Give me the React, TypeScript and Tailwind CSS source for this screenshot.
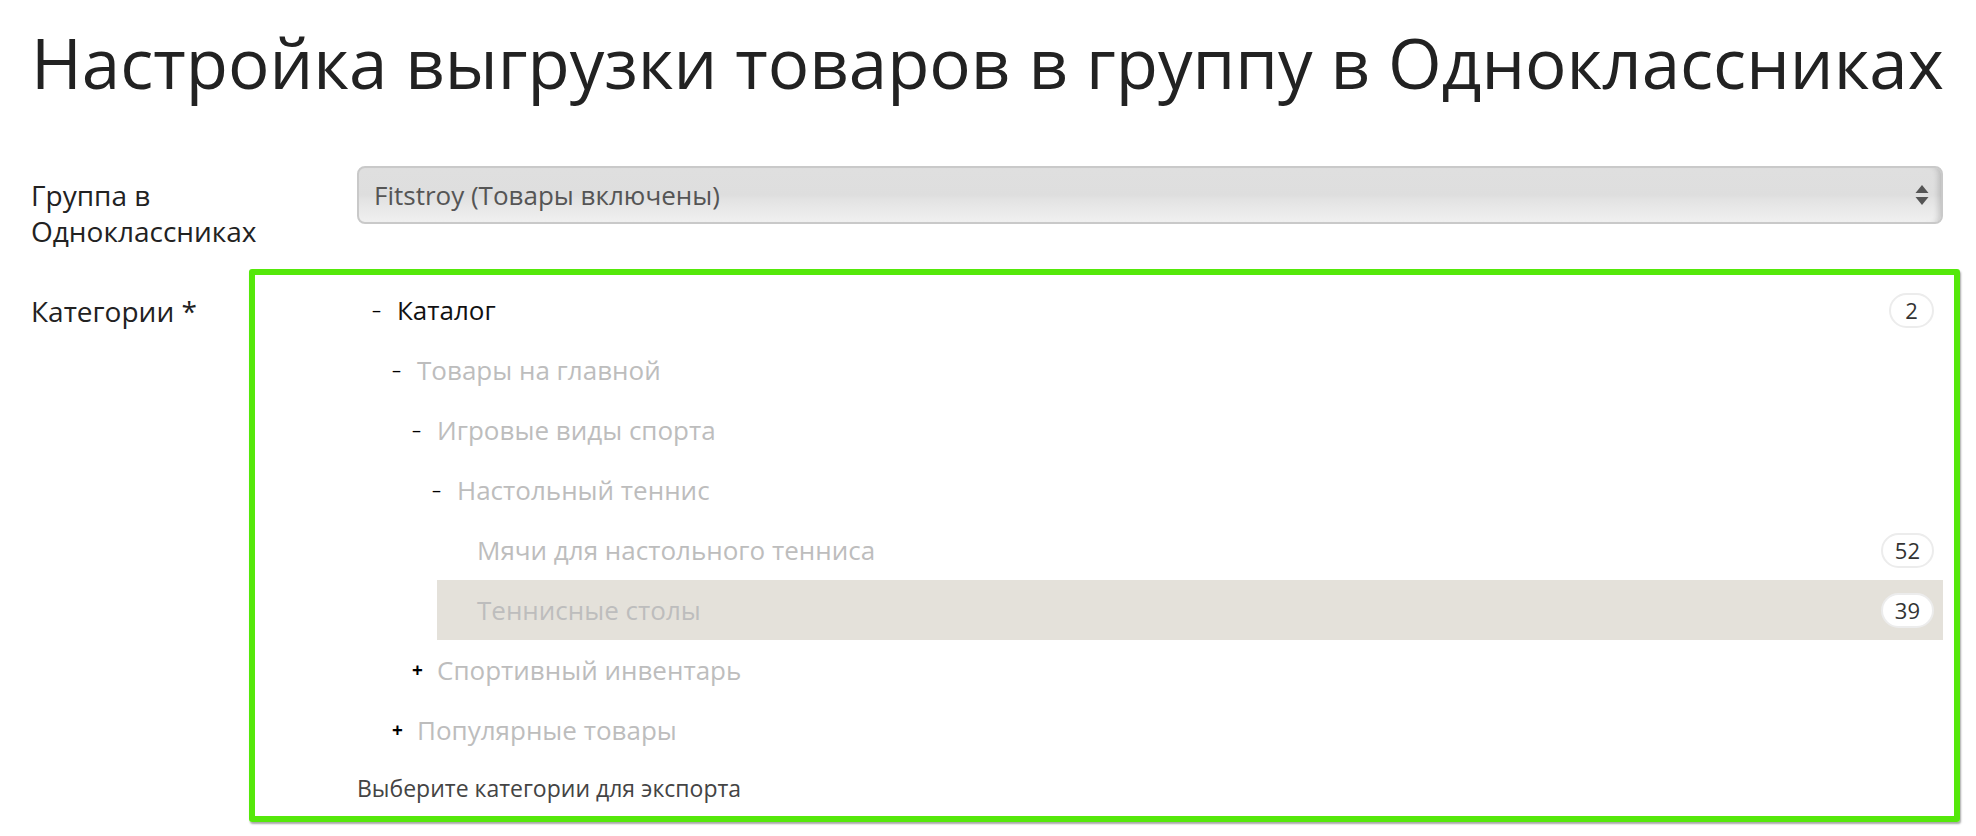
import { ReactNode } from 'react'

type Row = {
  level: number
  toggle?: '–' | '+'
  label: string
  count?: number
  active?: boolean
  selected?: boolean
}

const ROWS: Row[] = [
  { level: 0, toggle: '–', label: 'Каталог', count: 2, active: true },
  { level: 1, toggle: '–', label: 'Товары на главной' },
  { level: 2, toggle: '–', label: 'Игровые виды спорта' },
  { level: 3, toggle: '–', label: 'Настольный теннис' },
  { level: 4, label: 'Мячи для настольного тенниса', count: 52 },
  { level: 4, label: 'Теннисные столы', count: 39, selected: true },
  { level: 2, toggle: '+', label: 'Спортивный инвентарь' },
  { level: 1, toggle: '+', label: 'Популярные товары' },
]

// indent per tree level, written out so tailwind picks them up
const INDENT = ['ml-0', 'ml-[20px]', 'ml-[40px]', 'ml-[60px]', 'ml-[80px]']

function Field({ label, children }: { label: ReactNode; children: ReactNode }) {
  return (
    <div className="grid grid-cols-[326px_1fr] items-start">
      <div className="text-[28px] leading-[36px] font-medium text-[#222]">{label}</div>
      <div>{children}</div>
    </div>
  )
}

function Badge({ n }: { n: number }) {
  return (
    <span className="ml-auto mr-[9px] h-[35px] min-w-[45px] px-[12px] rounded-full border-2 border-[#ececec] bg-white text-[22px] text-[#333] flex items-center justify-center">
      {n}
    </span>
  )
}

function TreeRow({ row }: { row: Row }) {
  return (
    <div
      className={`${INDENT[row.level]} h-[60px] flex items-center pl-[15px] ${
        row.selected ? 'bg-[#e4e1da]' : ''
      }`}
    >
      <span
        className={`w-[25px] text-black leading-none ${
          row.toggle === '+' ? 'text-[19px] font-bold' : 'text-[18px] font-medium'
        }`}
      >
        {row.toggle ?? ''}
      </span>
      <span className={`text-[26px] ${row.active ? 'text-[#111]' : 'text-[#bdbdbd]'}`}>
        {row.label}
      </span>
      {row.count !== undefined && <Badge n={row.count} />}
    </div>
  )
}

export default function App() {
  return (
    <div
      className="min-h-screen bg-white pl-[31px] pr-[33px]"
      style={{ fontFamily: '"Open Sans", "Noto Sans", sans-serif' }}
    >
      <h1 className="pt-[28px] text-[69px] leading-none font-normal text-[#222] whitespace-nowrap">
        Настройка выгрузки товаров в группу в Одноклассниках
      </h1>

      <div className="mt-[69px]">
        <Field
          label={
            <div className="pt-[11px]">
              Группа в<br />
              Одноклассниках
            </div>
          }
        >
          {/* select */}
          <div className="h-[58px] rounded-[8px] border-2 border-[#c9c9c9] bg-[linear-gradient(to_bottom,#dfdfdf_0%,#dedede_50%,#e3e3e3_58%,#f0f0f0_100%)] shadow-[inset_-7px_0_6px_-5px_rgba(0,0,0,0.18)] flex items-center pl-[15px] pr-[12px]">
            <span className="text-[26px] text-[#555]">Fitstroy (Товары включены)</span>
            <svg className="ml-auto" width="14" height="22" viewBox="0 0 14 22">
              <path d="M7 1 L13.5 9 L0.5 9 Z" fill="#555" />
              <path d="M0.5 13 L13.5 13 L7 21 Z" fill="#555" />
            </svg>
          </div>
        </Field>
      </div>

      <div className="mt-[31px]">
        <Field label={<div className="pt-[13px]">Категории *</div>}>
          <div className="relative">
            {ROWS.map((r) => (
              <TreeRow key={r.label} row={r} />
            ))}
            <p className="pt-[14px] text-[23px] leading-[28px] text-[#444]">
              Выберите категории для экспорта
            </p>
            {/* green highlight frame drawn over the field */}
            <div className="pointer-events-none absolute -left-[108px] -right-[17px] -top-[11px] -bottom-[20px] border-[6px] border-[#55e80a] rounded-[3px] shadow-[1px_2px_2px_rgba(0,0,0,0.35)]" />
          </div>
        </Field>
      </div>
    </div>
  )
}
